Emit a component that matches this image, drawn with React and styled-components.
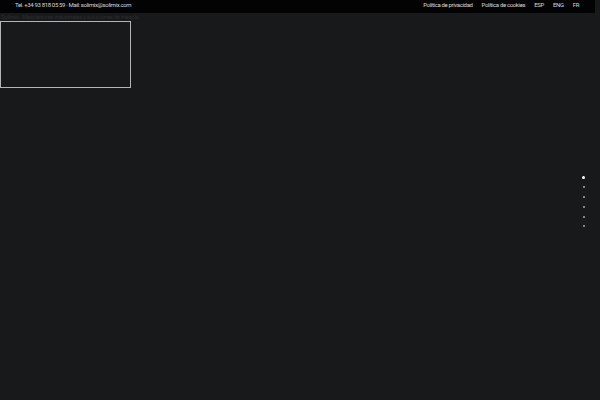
import React from "react";
import styled, { createGlobalStyle } from "styled-components";

const Global = createGlobalStyle`
  html, body { margin: 0; padding: 0; background: #18191b; }
  body { font-family: Roboto, "Liberation Sans", sans-serif; overflow: hidden; }
  #root { min-height: 400px; }
`;

const Page = styled.div`
  position: relative;
  width: 600px;
  height: 400px;
  background: #18191b;
`;

const TopBar = styled.header`
  width: 595px;
  height: 13px;
  background: #030303;
  display: flex;
  align-items: flex-start;
  justify-content: space-between;
  padding: 1px 16px 0 15px;
  box-sizing: border-box;
  color: #d8d8d8;
  font-size: 6px;
  letter-spacing: -0.35px;
  line-height: 7px;
`;

const Links = styled.nav`
  display: flex;
  align-items: center;
  gap: 9px;
`;

const Link = styled.span`
  color: #d8d8d8;
`;

const Hidden = styled.div`
  height: 8px;
  font-size: 6px;
  letter-spacing: -0.3px;
  line-height: 8px;
  color: #2b2c2f;
  white-space: nowrap;
  padding-left: 1px;
`;

const Frame = styled.div`
  width: 129px;
  height: 65px;
  border: 1px solid #b5b5b5;
  background: #18191b;
`;

const Dots = styled.ul`
  position: absolute;
  right: 15px;
  top: 175.5px;
  margin: 0;
  padding: 0;
  list-style: none;
  display: flex;
  flex-direction: column;
  align-items: center;
  gap: 7.8px;
`;

const Dot = styled.li`
  width: ${(p) => (p.$active ? "3px" : "2px")};
  height: ${(p) => (p.$active ? "3px" : "2px")};
  border-radius: 50%;
  background: ${(p) => (p.$active ? "#ffffff" : "#a8a8a8")};
`;

export default function App() {
  return (
    <>
      <Global />
      <Page>
        <TopBar>
          <span>Tel. +34 93 818 05 59 · Mail: solimix@solimix.com</span>
          <Links>
            <Link>Política de privacidad</Link>
            <Link>Política de cookies</Link>
            <Link>ESP</Link>
            <Link>ENG</Link>
            <Link>FR</Link>
          </Links>
        </TopBar>
        <Hidden>Solimix · Mezcladoras industriales y soluciones de mezcla</Hidden>
        <Frame />
        <Dots>
          <Dot $active />
          <Dot />
          <Dot />
          <Dot />
          <Dot />
          <Dot />
        </Dots>
      </Page>
    </>
  );
}
